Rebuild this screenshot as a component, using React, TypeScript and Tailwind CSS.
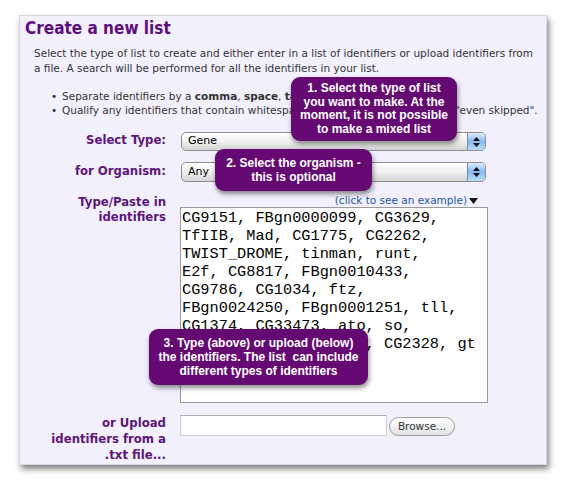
const identifiers = [
  "CG9151, FBgn0000099, CG3629,",
  "TfIIB, Mad, CG1775, CG2262,",
  "TWIST_DROME, tinman, runt,",
  "E2f, CG8817, FBgn0010433,",
  "CG9786, CG1034, ftz,",
  "FBgn0024250, FBgn0001251, tll,",
  "CG1374, CG33473, ato, so,",
  "FBgn0003117, CG11367, CG2328, gt",
].join("\n");

const labelCls =
  "w-[146px] shrink-0 text-right font-['DejaVu_Sans_Condensed','DejaVu_Sans',sans-serif] font-bold text-[13px] text-[#5d1579]";

function AquaSelect({ value, height }: { value: string; height: string }) {
  return (
    <div
      className={`ml-[1px] w-[305px] ${height} flex rounded-[5px] overflow-hidden border border-[#8d8d8d] bg-linear-to-b from-white via-[#f0f0f0] to-[#d4d4d4]`}
    >
      <div className="flex-1 flex items-center pl-[6px] text-[11px] text-black">{value}</div>
      <div className="w-[18px] flex flex-col items-center justify-center gap-[2px] border-l border-[#6f8fbf] bg-linear-to-b from-[#dcedfc] via-[#86b9ef] to-[#bcdcfa]">
        <svg width="7" height="4" viewBox="0 0 7 4">
          <path d="M3.5 0L7 4H0z" fill="#111" />
        </svg>
        <svg width="7" height="4" viewBox="0 0 7 4">
          <path d="M0 0H7L3.5 4z" fill="#111" />
        </svg>
      </div>
    </div>
  );
}

function Tip({ className, children }: { className: string; children: React.ReactNode }) {
  return (
    <div
      className={`absolute rounded-[9px] bg-[#650a73] text-white text-center font-['Liberation_Sans',Arial,sans-serif] font-bold text-[12px] shadow-[1px_3px_5px_rgba(0,0,0,0.45)] ${className}`}
    >
      {children}
    </div>
  );
}

export default function App() {
  return (
    <div className="w-[566px] h-[488px] bg-white pt-[15px] pl-[19px] font-['DejaVu_Sans',sans-serif]">
      <div className="relative w-[528px] h-[450px] bg-[#f3f0fd] border border-[#d9d5e2] shadow-[2px_4px_6px_rgba(0,0,0,0.5)]">
        <h1 className="pl-[5px] pt-[2px] leading-[20px] font-['DejaVu_Sans_Condensed','DejaVu_Sans',sans-serif] font-bold text-[17px] text-[#5e0d7e]">
          Create a new list
        </h1>

        <p className="mt-[8px] pl-[14px] text-[10.5px] leading-[15px] text-[#333] whitespace-nowrap">
          Select the type of list to create and either enter in a list of identifiers or upload identifiers from
          <br />a file. A search will be performed for all the identifiers in your list.
        </p>

        <ul className="mt-[13px] text-[10.5px] leading-[14px] text-[#333] whitespace-nowrap">
          <li className="flex pl-[31px]">
            <span className="w-[11px] shrink-0">•</span>
            <span>
              Separate identifiers by a <b>comma</b>, <b>space</b>, <b>tab</b> or <b>new line</b>.
            </span>
          </li>
          <li className="flex pl-[31px]">
            <span className="w-[11px] shrink-0">•</span>
            <span>Qualify any identifiers that contain whitespace with double quotes like so: "even skipped".</span>
          </li>
        </ul>

        <div className="mt-[15px] flex flex-col">
          <div className="flex items-start gap-[14px]">
            <div className={`${labelCls} leading-[16px]`}>Select Type:</div>
            <AquaSelect value="Gene" height="h-[19px]" />
          </div>

          <div className="mt-[11px] flex items-start gap-[14px]">
            <div className={`${labelCls} leading-[18px]`}>for Organism:</div>
            <AquaSelect value="Any" height="h-[20px]" />
          </div>

          <div className="mt-[12px] flex items-start gap-[14px]">
            <div className={`${labelCls} leading-[15px]`}>
              Type/Paste in
              <br />
              identifiers
            </div>
            <div className="flex flex-col">
              <div className="h-[13px] flex items-center justify-end gap-[2px] pr-[10px] text-[10.5px] text-[#2457a6]">
                <span>(click to see an example)</span>
                <svg width="9" height="6" viewBox="0 0 9 6">
                  <path d="M0 0H9L4.5 6z" fill="#111" />
                </svg>
              </div>
              <textarea
                readOnly
                defaultValue={identifiers}
                className="w-[308px] h-[196px] resize-none overflow-hidden bg-white border border-[#9a9a9a] pl-[1px] pt-[1px] font-['Liberation_Mono','Courier_New',monospace] text-[15.3px] leading-[18px] text-black outline-none"
              />
            </div>
          </div>

          <div className="mt-[12px] flex items-start gap-[14px]">
            <div className={`${labelCls} leading-[16px]`}>
              or Upload
              <br />
              identifiers from a
              <br />
              .txt file...
            </div>
            <div className="flex items-start">
              <div className="w-[207px] h-[21px] bg-white border border-[#cfcfcf] border-t-[#ababab]" />
              <div className="ml-[2px] mt-[2px] w-[66px] h-[19px] rounded-full border border-[#9c9c9c] bg-linear-to-b from-white to-[#e2e2e2] flex items-center justify-center text-[10.5px] text-[#333]">
                Browse...
              </div>
            </div>
          </div>
        </div>

        <Tip className="left-[271px] top-[61px] w-[166px] h-[64px] pt-[5px] leading-[13.5px]">
          1. Select the type of list
          <br />
          you want to make. At the
          <br />
          moment, it is not possible
          <br />
          to make a mixed list
        </Tip>
        <Tip className="left-[195px] top-[133px] w-[157px] h-[42px] pt-[7px] leading-[14px]">
          2. Select the organism -
          <br />
          this is optional
        </Tip>
        <Tip className="left-[129px] top-[313px] w-[219px] h-[56px] pt-[7px] leading-[14px]">
          3. Type (above) or upload (below)
          <br />
          the identifiers. The list&nbsp; can include
          <br />
          different types of identifiers
        </Tip>
      </div>
    </div>
  );
}
